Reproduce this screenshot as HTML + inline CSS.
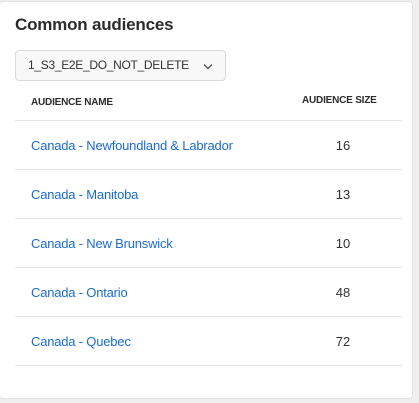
<!DOCTYPE html>
<html><head><style>
body{margin:0;width:419px;height:403px;background:#efefef;font-family:"Liberation Sans",sans-serif;position:relative;overflow:hidden}
.card{position:absolute;left:-1px;top:1px;width:414px;height:398px;background:#fff;border:1px solid #e3e3e3;border-radius:4px;box-sizing:border-box}
h1{position:absolute;left:15px;top:15px;margin:0;font-size:17px;font-weight:bold;color:#2c2c2c;letter-spacing:-0.2px}
.dd{position:absolute;left:15px;top:50px;width:211px;height:31px;box-sizing:border-box;border:1px solid #dadada;border-radius:4px;background:#f8f8f8;font-size:12px;letter-spacing:-0.3px;color:#333;line-height:29px;padding-left:12px}
.dd svg{position:absolute;right:12px;top:12px}
.hd{position:absolute;font-size:10px;font-weight:bold;color:#2c2c2c;letter-spacing:-0.2px}
.line{position:absolute;left:15px;width:387px;height:1px;background:#e4e4e4}
.nm{position:absolute;left:31px;font-size:13px;color:#1a6cd1;letter-spacing:-0.2px}
.sz{position:absolute;left:323px;width:40px;text-align:center;font-size:13px;color:#333}
</style></head><body>
<div class="card"></div>
<h1>Common audiences</h1>
<div class="dd">1_S3_E2E_DO_NOT_DELETE<svg width="10" height="7" viewBox="0 0 10 7"><path d="M1 1.5L5 5.5L9 1.5" fill="none" stroke="#555" stroke-width="1.4"/></svg></div>
<div class="hd" style="left:31px;top:97px">AUDIENCE NAME</div>
<div class="hd" style="left:302px;top:95px">AUDIENCE SIZE</div>
<div class="line" style="top:120px"></div>
<div class="nm" style="top:138px">Canada - Newfoundland &amp; Labrador</div><div class="sz" style="top:138px">16</div>
<div class="line" style="top:169px"></div>
<div class="nm" style="top:187px">Canada - Manitoba</div><div class="sz" style="top:187px">13</div>
<div class="line" style="top:218px"></div>
<div class="nm" style="top:236px">Canada - New Brunswick</div><div class="sz" style="top:236px">10</div>
<div class="line" style="top:267px"></div>
<div class="nm" style="top:285px">Canada - Ontario</div><div class="sz" style="top:285px">48</div>
<div class="line" style="top:316px"></div>
<div class="nm" style="top:334px">Canada - Quebec</div><div class="sz" style="top:334px">72</div>
<div class="line" style="top:365px"></div>
</body></html>
